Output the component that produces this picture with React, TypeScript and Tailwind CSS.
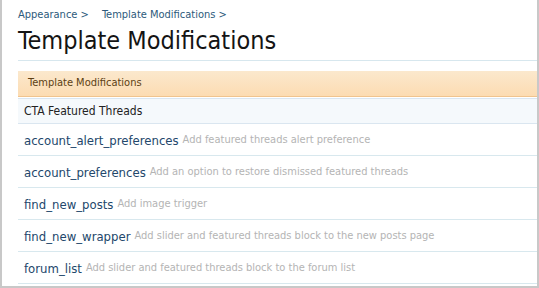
const rows = [
  { name: "account_alert_preferences", desc: "Add featured threads alert preference" },
  { name: "account_preferences", desc: "Add an option to restore dismissed featured threads" },
  { name: "find_new_posts", desc: "Add image trigger" },
  { name: "find_new_wrapper", desc: "Add slider and featured threads block to the new posts page" },
  { name: "forum_list", desc: "Add slider and featured threads block to the forum list" },
];

export default function App() {
  return (
    <div
      className="w-[539px] h-[288px] overflow-hidden bg-white border-l-2 border-r-2 border-b-2 border-[#c8c8c8] pl-4 flex flex-col"
      style={{ fontFamily: '"DejaVu Sans Condensed", "DejaVu Sans", Verdana, sans-serif' }}
    >
      <div className="pt-[7px] h-[22px] text-[11px] text-[#2d5a7b] flex gap-[13px]">
        <span>Appearance &gt;</span>
        <span>Template Modifications &gt;</span>
      </div>
      <h1 className="text-[25px] leading-[34px] text-[#141414] mt-[2px] pb-[2px] border-b border-[#d7e7ee]">
        Template Modifications
      </h1>
      <div className="mt-[10px] h-[26px] bg-gradient-to-b from-[#fbe8cd] to-[#fcdcb2] border-b border-[#f0c48e] text-[11px] text-[#5c3f14] pl-[10px] flex items-center">
        Template Modifications
      </div>
      <div className="mt-[1px] h-[26px] bg-[#f5f9fc] border-t border-b border-[#dae6f0] text-[12px] text-[#222] pl-[6px] flex items-center">
        CTA Featured Threads
      </div>
      {rows.map((r) => (
        <div
          key={r.name}
          className="h-[32px] shrink-0 border-b border-[#d8e8ee] pl-[6px] pt-[2px] flex items-center whitespace-nowrap"
        >
          <span className="text-[13px] text-[#23476b]">{r.name}</span>
          <span className="text-[11px] text-[#b4b4b4] ml-[4px]">{r.desc}</span>
        </div>
      ))}
    </div>
  );
}
